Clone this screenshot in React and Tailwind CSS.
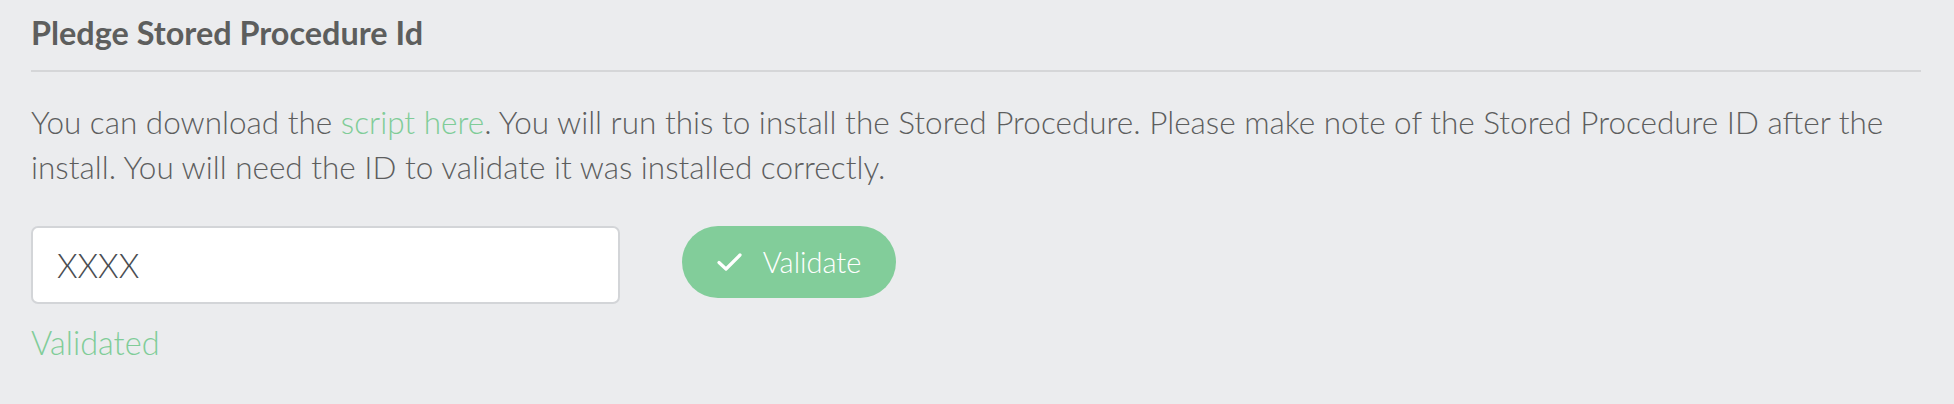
import React from "react";

export default function App() {
  return (
    <div
      className="min-h-screen w-full bg-[#ebecee] pl-[31px] pr-[33px] pt-[13px]"
      style={{ fontFamily: "Lato, 'Open Sans', sans-serif" }}
    >
      <h2 className="text-[32.4px] font-bold leading-[40px] text-[#5d5e5d]">
        Pledge Stored Procedure Id
      </h2>
      <div className="mt-[17px] h-[2px] w-full bg-[#d5d6d8]" />
      <p className="mt-[28px] text-[31.5px] font-light leading-[45px] text-[#5d5e5e]">
        You can download the{" "}
        <a href="#" className="text-[#80cc98]">
          script here
        </a>
        . You will run this to install the Stored Procedure. Please make note of the Stored Procedure ID after the
        install. You will need the ID to validate it was installed correctly.
      </p>
      <div className="mt-[36px] flex items-start gap-[62px]">
        <input
          type="text"
          defaultValue="XXXX"
          className="h-[78px] w-[589px] rounded-[7px] border-2 border-[#d3d5d8] bg-white px-[24px] text-[33px] font-light text-[#4a4d52] outline-none"
          style={{ fontFamily: "Lato, sans-serif" }}
        />
        <button className="flex h-[72px] w-[214px] items-center justify-center gap-[21px] rounded-full bg-[#82cd9a] text-[29px] font-light text-white">
          <svg width="25" height="18" viewBox="0 0 25 18" fill="none">
            <path d="M2 9.5 L9 16 L23 2" stroke="white" strokeWidth="3.2" strokeLinecap="round" strokeLinejoin="round" />
          </svg>
          <span>Validate</span>
        </button>
      </div>
      <div className="mt-[16px] text-[32.5px] font-light leading-[45px] text-[#80cc98]">Validated</div>
    </div>
  );
}
